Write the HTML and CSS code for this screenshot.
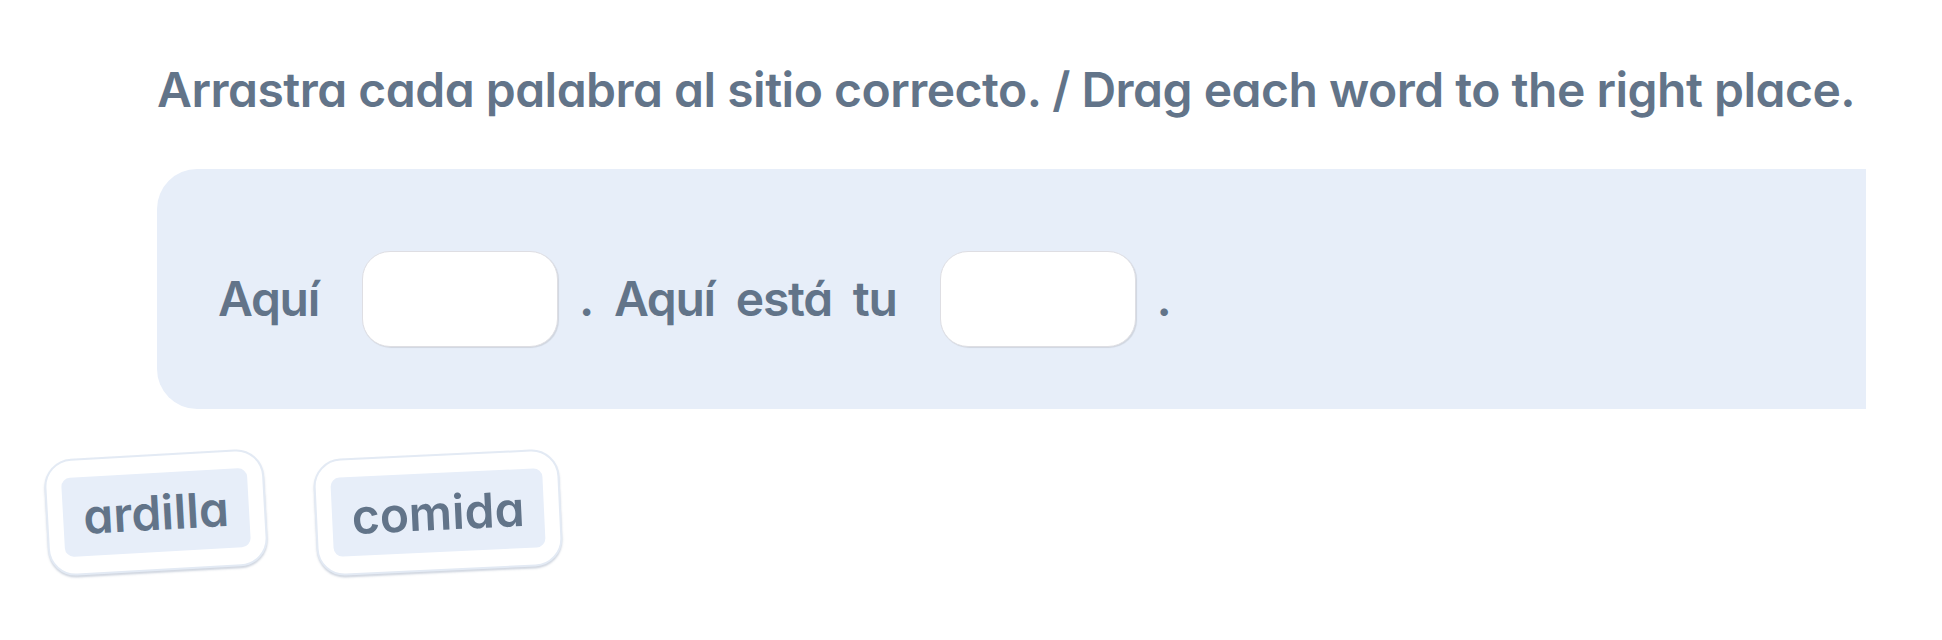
FILE: index.html
```html
<!DOCTYPE html>
<html lang="es">
<head>
<meta charset="utf-8">
<title>Arrastra cada palabra</title>
<link rel="stylesheet" href="styles.css">
</head>
<body>
<main class="page">
  <h1 class="prompt">Arrastra cada palabra al sitio correcto. / Drag each word to the right place.</h1>
  <section class="sentence-box">
    <span class="word">Aquí</span>
    <span class="blank"></span>
    <span class="word">.</span>
    <span class="word">Aquí</span>
    <span class="word">está</span>
    <span class="word">tu</span>
    <span class="blank"></span>
    <span class="word">.</span>
  </section>
  <section class="bank">
    <div class="chip chip-a"><span class="chip-inner">ardilla</span></div>
    <div class="chip chip-b"><span class="chip-inner">comida</span></div>
  </section>
</main>
</body>
</html>
```

FILE: styles.css
```css
html, body {
  margin: 0;
  padding: 0;
  background: #ffffff;
}

body {
  font-family: Inter, "Noto Sans", sans-serif;
  font-feature-settings: "cv11" 1;
  color: #627489;
}

.page {
  width: 1942px;
  height: 640px;
  overflow: hidden;
}

.prompt {
  margin: 0;
  padding: 61px 0 0 157px;
  font-size: 48px;
  line-height: 58px;
  font-weight: 600;
  letter-spacing: -0.5px;
}

.sentence-box {
  margin: 50px 0 0 157px;
  width: 1709px;
  box-sizing: border-box;
  height: 240px;
  padding: 82px 0 62px 61px;
  background: #e7eef9;
  border-radius: 40px 0 0 40px;
  display: flex;
  align-items: center;
  gap: 21px;
}

.word {
  font-size: 48px;
  line-height: 58px;
  font-weight: 600;
  letter-spacing: -1.3px;
}

.blank {
  width: 196px;
  height: 96px;
  box-sizing: border-box;
  margin-left: 22px;
  background: #ffffff;
  border: 1.5px solid #dedee3;
  border-radius: 28px;
  box-shadow: 1px 1px 1px rgba(0, 0, 0, 0.1);
}

.bank {
  display: flex;
  gap: 49px;
  padding: 45px 0 0 46px;
}

.chip {
  width: 220px;
  height: 117px;
  box-sizing: border-box;
  background: #ffffff;
  border: 2px solid #e3eaf4;
  border-radius: 28px;
  box-shadow: 0 2px 2px rgba(120, 138, 165, 0.35);
  display: flex;
  align-items: center;
  justify-content: center;
}

.chip-a {
  transform: rotate(-3.2deg);
}

.chip-b {
  width: 246px;
  transform: rotate(-2.7deg);
}

.chip-inner {
  flex: 1;
  margin: 0 15px;
  height: 79px;
  display: flex;
  align-items: center;
  justify-content: center;
  background: #e7eef9;
  border-radius: 9px;
  font-size: 48px;
  font-weight: 600;
  line-height: 58px;
}
```
